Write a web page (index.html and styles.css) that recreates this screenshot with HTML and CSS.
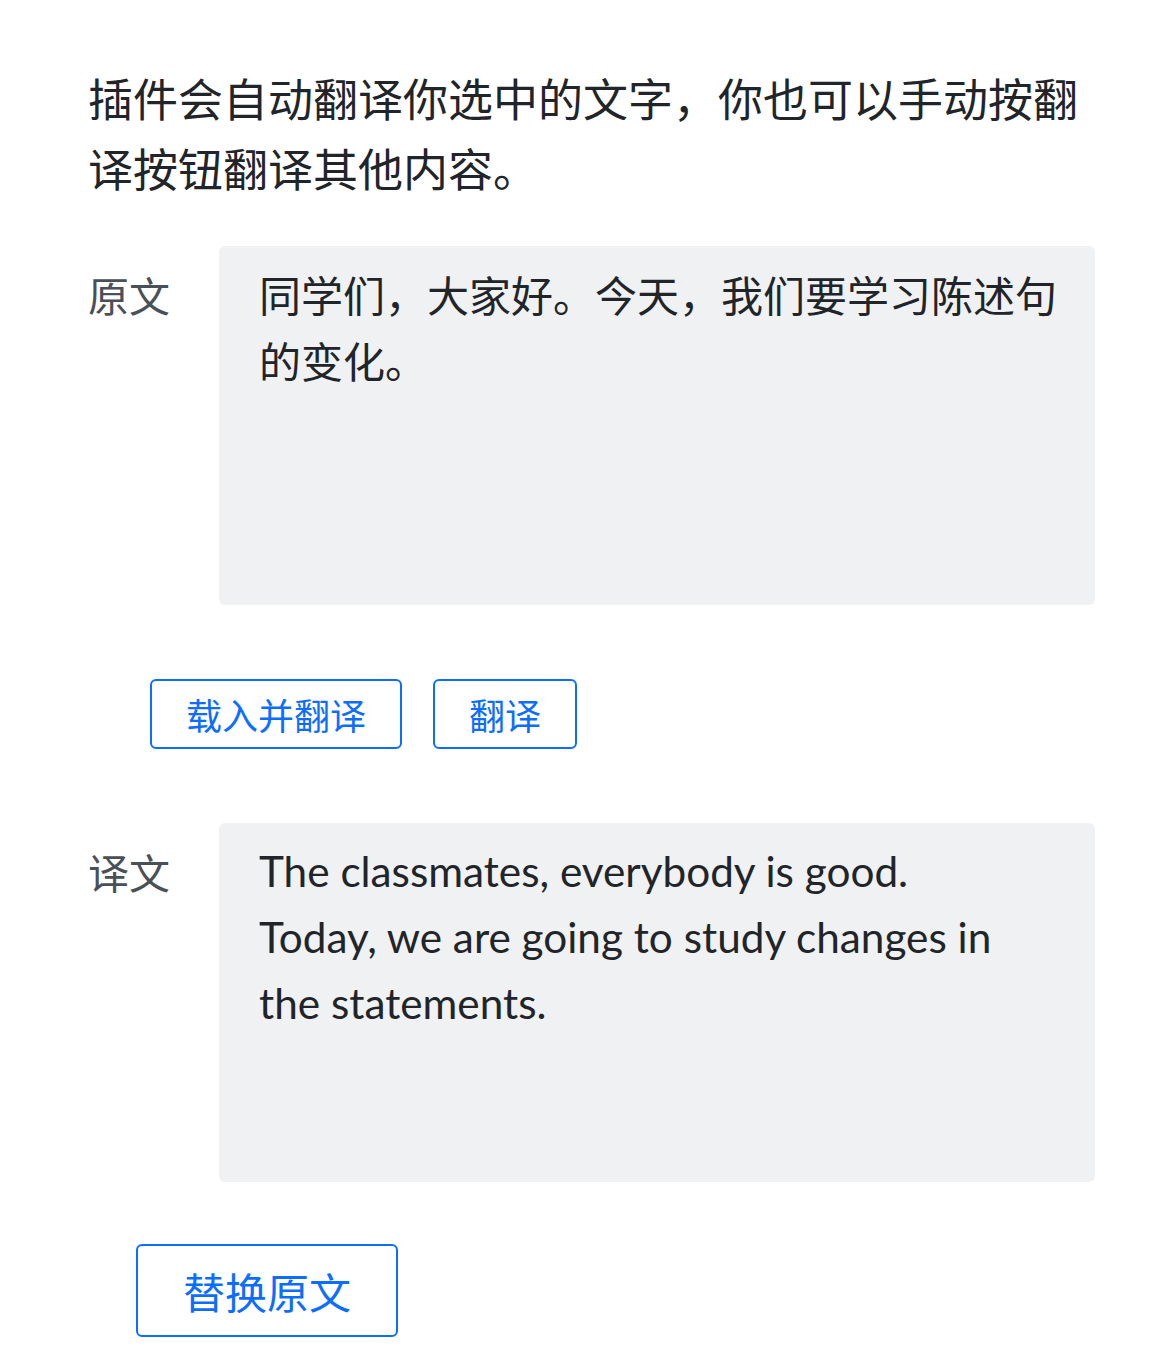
FILE: index.html
```html
<!DOCTYPE html>
<html lang="zh">
<head>
<meta charset="utf-8">
<title>翻译</title>
<link rel="stylesheet" href="styles.css">
</head>
<body>
<main class="page">
  <p class="intro">插件会自动翻译你选中的文字，你也可以手动按翻译按钮翻译其他内容。</p>
  <div class="field">
    <div class="label">原文</div>
    <div class="box">同学们，大家好。今天，我们要学习陈述句的变化。</div>
  </div>
  <div class="actions actions-top">
    <button class="btn">载入并翻译</button>
    <button class="btn">翻译</button>
  </div>
  <div class="field field-second">
    <div class="label">译文</div>
    <div class="box box-en">The classmates, everybody is good.<br>Today, we are going to study changes in the statements.</div>
  </div>
  <div class="actions actions-bottom">
    <button class="btn btn-lg">替换原文</button>
  </div>
</main>
</body>
</html>
```
FILE: styles.css
```css
html, body {
  margin: 0;
  padding: 0;
  background: #ffffff;
}
body {
  font-family: "Noto Sans CJK SC", sans-serif;
  color: #212529;
}
.page {
  padding: 63px 68px 16px 88px;
}
.intro {
  margin: 0 0 43px;
  font-family: "Noto Sans CJK SC", sans-serif;
  font-size: 45px;
  line-height: 70px;
}
.field {
  display: grid;
  grid-template-columns: 131px 1fr;
}
.label {
  font-family: "Noto Sans CJK SC", sans-serif;
  font-size: 41px;
  line-height: 66px;
  color: #495057;
  padding-top: 15px;
}
.box {
  box-sizing: border-box;
  height: 359px;
  background: #f0f1f3;
  border-radius: 6px;
  padding: 15px 36px 18px 40px;
  font-family: "Noto Sans CJK SC", sans-serif;
  font-size: 42px;
  line-height: 66px;
  color: #212529;
}
.box-en {
  padding: 15px 40px 18px 40px;
  font-family: "Lato", "Noto Sans", sans-serif;
  font-size: 42.3px;
}
.actions {
  display: flex;
  gap: 31px;
}
.actions-top {
  margin: 74px 0 0 62px;
}
.actions-bottom {
  margin: 62px 0 0 48px;
}
.field-second {
  margin-top: 74px;
}
.btn {
  font-family: "Noto Sans CJK SC", sans-serif;
  font-size: 36px;
  line-height: 66px;
  padding: 0 34px;
  color: #0d6efd;
  background: #ffffff;
  border: 2px solid #0d6efd;
  border-radius: 6px;
  cursor: pointer;
}
.btn-lg {
  font-size: 42px;
  line-height: 89px;
  padding: 0 45px;
}
```
